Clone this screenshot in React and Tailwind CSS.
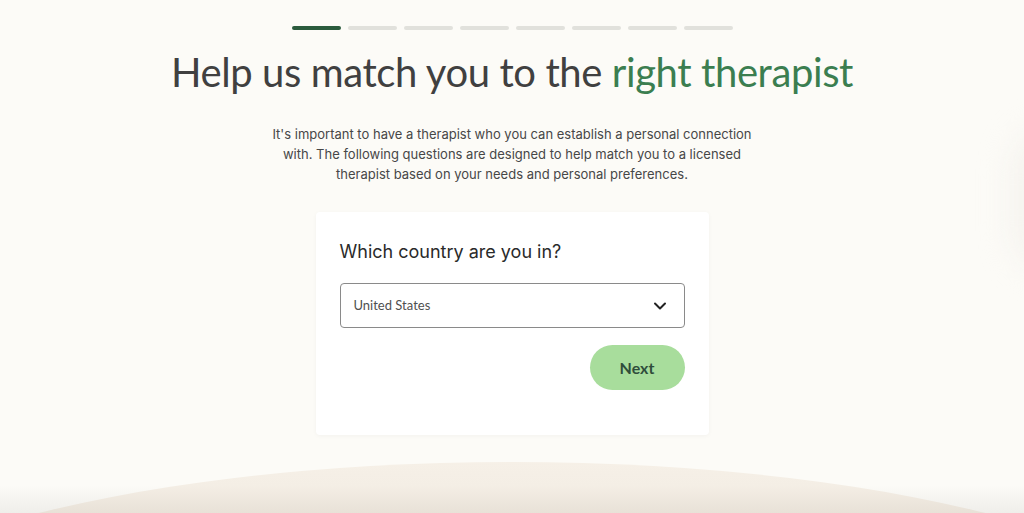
import { ChevronDown } from 'lucide-react';

const steps = [0, 1, 2, 3, 4, 5, 6, 7];

export default function App() {
  return (
    <div className="relative min-h-[513px] w-full overflow-hidden bg-[#fcfbf7] font-['Inter',sans-serif]">
      {/* soft backdrop shapes */}
      <div className="pointer-events-none absolute bottom-0 left-0 h-[28px] w-full bg-gradient-to-b from-transparent to-[#efeeea]" />
      <div className="pointer-events-none absolute left-1/2 top-[462px] h-[420px] w-[1450px] -translate-x-1/2 rounded-[50%] bg-[linear-gradient(to_bottom,#f6f0e7_0px,#f4eee5_24px,#e8e1d7_51px)]" />
      <div className="pointer-events-none absolute right-[-70px] top-[130px] h-[140px] w-[80px] rounded-full bg-[#f4f2ed] blur-[16px]" />

      <div className="relative flex flex-col items-center pt-[26px]">
        <div className="flex gap-[7px]">
          {steps.map((i) => (
            <div
              key={i}
              className={`h-[4px] w-[49px] rounded-full ${i === 0 ? 'bg-[#2b5b3d]' : 'bg-[#e1e1dc]'}`}
            />
          ))}
        </div>

        <h1 className="mt-[16px] font-['Lato',sans-serif] text-[40px] leading-[52px] tracking-[-0.4px] text-[#404040]">
          Help us match you to the <span className="text-[#3b7e50]">right therapist</span>
        </h1>

        <p className="mt-[26px] w-[500px] text-center text-[13px] leading-[20px] text-[#474747]">
          It's important to have a therapist who you can establish a personal connection with. The
          following questions are designed to help match you to a licensed therapist based on your
          needs and personal preferences.
        </p>

        <div className="mt-[28px] flex w-[393px] flex-col rounded-[4px] bg-white px-[24px] pb-[45px] pt-[27px] shadow-[0_1px_4px_rgba(0,0,0,0.04)]">
          <h2 className="text-[18px] leading-[26px] text-[#2a2a2a]">Which country are you in?</h2>

          <div className="mt-[18px] flex h-[45px] items-center justify-between rounded-[4px] border border-[#8a8a8a] pl-[13px] pr-[14px]">
            <span className="font-['Lato',sans-serif] text-[13px] text-[#4f4f4f]">United States</span>
            <ChevronDown size={20} strokeWidth={2.4} className="text-[#222]" />
          </div>

          <div className="mt-[17px] flex justify-end">
            <button className="h-[45px] w-[95px] rounded-full bg-[#a8dd9c] font-['Lato',sans-serif] text-[16px] font-bold text-[#2f4d3b]">
              Next
            </button>
          </div>
        </div>
      </div>
    </div>
  );
}
